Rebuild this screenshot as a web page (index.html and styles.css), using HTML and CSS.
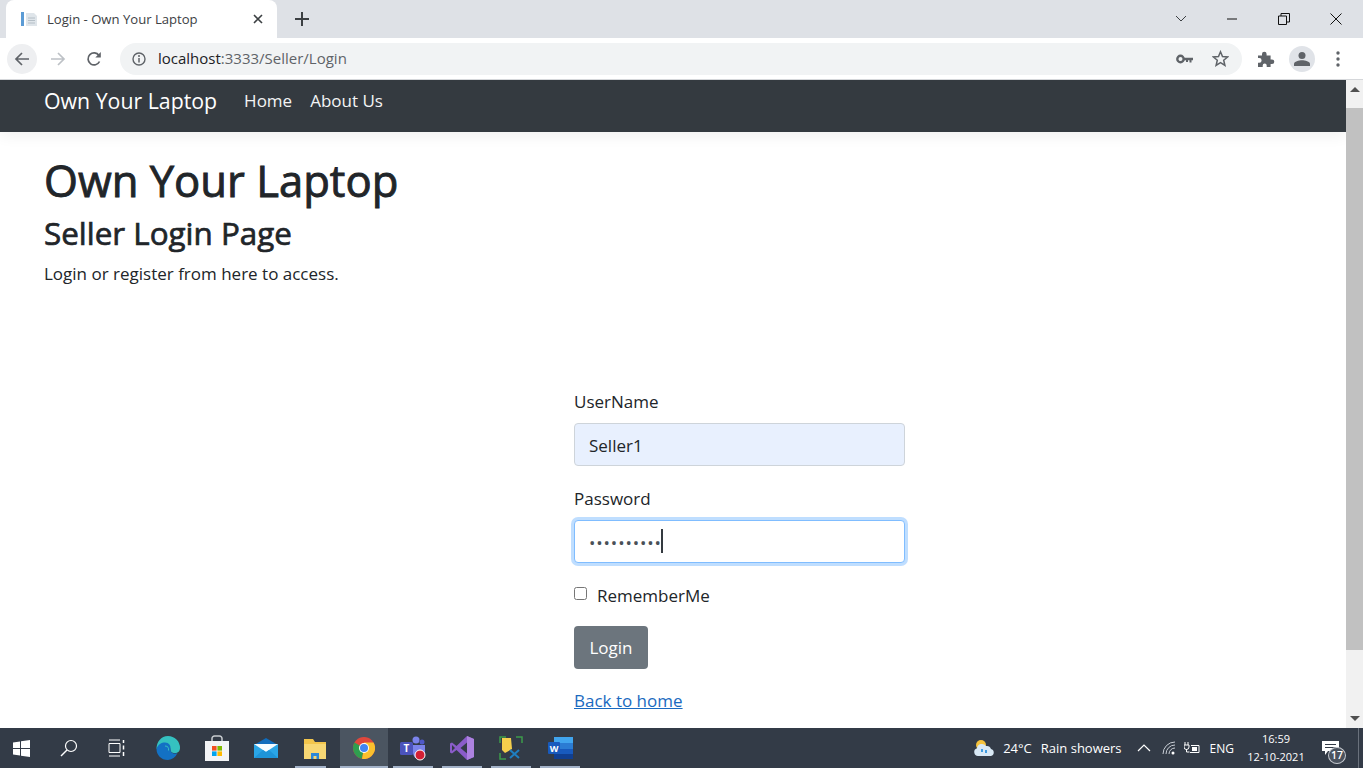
FILE: index.html
```html
<!DOCTYPE html>
<html lang="en">
<head>
  <meta charset="UTF-8">
  <meta name="viewport" content="width=device-width, initial-scale=1.0">
  <title>Login - Own Your Laptop</title>
  <link rel="stylesheet" href="styles.css">
</head>
<body>
  <!-- browser tabs -->
  <div class="tabstrip">
    <div class="tab">
      <svg class="favicon" width="18" height="18" viewBox="0 0 18 18"><rect x="1" y="2" width="3" height="14" fill="#5b9bd5"/><path d="M6 3h8l3 3v10H6z" fill="#dfe5ea"/><path d="M8 8h7M8 10.500h7M8 13h7" stroke="#b4bec6"/></svg>
      <span class="tab-title">Login - Own Your Laptop</span>
      <svg class="tab-close" width="10" height="10" viewBox="0 0 10 10"><path d="M1 1l8 8M9 1l-8 8" stroke="#3c4043" stroke-width="1.600"/></svg>
    </div>
    <svg class="new-tab" width="14" height="14" viewBox="0 0 14 14"><path d="M7 0v14M0 7h14" stroke="#3c4043" stroke-width="2"/></svg>
    <div class="window-controls">
      <svg class="win-btn" width="12" height="12" viewBox="0 0 12 12"><path d="M1 3l5 5 5-5" fill="none" stroke="#3c4043"/></svg>
      <svg class="win-btn" width="12" height="12" viewBox="0 0 12 12"><path d="M1 6h10" stroke="#111"/></svg>
      <svg class="win-btn" width="12" height="12" viewBox="0 0 12 12"><path d="M.5 3h8v8.500h-8zM3 3V.5h8.500V9H8.500" fill="none" stroke="#111"/></svg>
      <svg class="win-btn" width="12" height="12" viewBox="0 0 12 12"><path d="M.5.500l11 11M11.500.500l-11 11" stroke="#111"/></svg>
    </div>
  </div>

  <!-- address bar -->
  <div class="toolbar">
    <div class="tool-btn back">
      <svg width="16" height="16" viewBox="0 0 16 16"><path d="M15 8H2M8 2L2 8l6 6" fill="none" stroke="#5f6368" stroke-width="1.700"/></svg>
    </div>
    <div class="tool-btn forward">
      <svg width="16" height="16" viewBox="0 0 16 16"><path d="M1 8h13M8 2l6 6-6 6" fill="none" stroke="#bdc1c6" stroke-width="1.700"/></svg>
    </div>
    <div class="tool-btn reload">
      <svg width="16" height="16" viewBox="0 0 16 16"><path d="M13.500 10.500A6 6 0 1 1 13 4.500" fill="none" stroke="#5f6368" stroke-width="1.700"/><path d="M14.800 1v5.500H9.300z" fill="#5f6368"/></svg>
    </div>
    <div class="omnibox">
      <svg class="info-icon" width="14" height="14" viewBox="0 0 14 14"><circle cx="7" cy="7" r="6" fill="none" stroke="#5f6368" stroke-width="1.400"/><path d="M7 6v4.500" stroke="#5f6368" stroke-width="1.500"/><circle cx="7" cy="4" r="1" fill="#5f6368"/></svg>
      <span class="url"><span class="url-host">localhost</span>:3333/Seller/Login</span>
      <svg class="omni-key" width="17" height="10" viewBox="0 0 17 10"><circle cx="4.500" cy="5" r="3.200" fill="none" stroke="#5f6368" stroke-width="2.400"/><path d="M8 3.800h9v2.400h-1.500V8.500h-2V6.200h-1.500V8h-2V6.200H8z" fill="#5f6368"/></svg>
      <svg class="omni-star" width="17" height="17" viewBox="0 0 17 17"><path d="M8.500 1.800l2 4.800 5.100.400-3.900 3.300 1.200 5-4.400-2.700-4.400 2.700 1.200-5L1.400 7l5.100-.400z" fill="none" stroke="#5f6368" stroke-width="1.500"/></svg>
    </div>
    <svg class="puzzle" width="18" height="18" viewBox="0 0 18 18"><path d="M1 5.500h4V4a2.300 2.300 0 0 1 4.600 0v1.500h4v4H15a2.300 2.300 0 0 1 0 4.600h-1.400V17H9.700v-1.400a2 2 0 0 0-4 0V17H1v-4.300h1.300a2.300 2.300 0 0 0 0-4.600H1z" fill="#5f6368"/></svg>
    <div class="avatar">
      <svg width="16" height="14" viewBox="0 0 16 14"><circle cx="8" cy="3.500" r="3.500" fill="#5f6368"/><path d="M0 14v-2c0-2.500 5-3.700 8-3.700s8 1.200 8 3.700v2z" fill="#5f6368"/></svg>
    </div>
    <svg class="menu-dots" width="4" height="16" viewBox="0 0 4 16"><circle cx="2" cy="2" r="1.700" fill="#5f6368"/><circle cx="2" cy="8" r="1.700" fill="#5f6368"/><circle cx="2" cy="14" r="1.700" fill="#5f6368"/></svg>
  </div>

  <!-- the page itself -->
  <div class="viewport">
    <div class="page">
      <nav class="navbar">
        <a class="brand">Own Your Laptop</a>
        <a class="nav-link">Home</a>
        <a class="nav-link">About Us</a>
      </nav>
      <div class="container">
        <h1>Own Your Laptop</h1>
        <h2>Seller Login Page</h2>
        <p class="lead-text">Login or register from here to access.</p>
        <form class="login-form">
          <div class="form-group">
            <label for="userName">UserName</label>
            <input class="form-control autofilled" type="text" id="userName" value="Seller1">
          </div>
          <div class="form-group">
            <label for="password">Password</label>
            <div class="input-wrap">
              <input class="form-control focused" type="password" id="password" value="Seller@123">
              <span class="caret"></span>
            </div>
          </div>
          <div class="form-check">
            <input class="check-box" type="checkbox" id="rememberMe">
            <label for="rememberMe">RememberMe</label>
          </div>
          <button class="btn-login" type="button">Login</button>
          <a class="back-link" href="#">Back to home</a>
        </form>
      </div>
    </div>
    <div class="scrollbar">
      <span class="arrow-up"></span>
      <div class="thumb"></div>
      <span class="arrow-down"></span>
    </div>
  </div>

  <!-- windows taskbar -->
  <div class="taskbar">
    <div class="task-cell start">
      <svg width="17" height="17" viewBox="0 0 17 17"><path d="M0 2.400l7-1v6.700H0zM8 1.300L17 0v8.100H8zM0 9h7v6.600l-7-1zM8 9h9v8l-9-1.300z" fill="#fff"/></svg>
    </div>
    <div class="task-cell search">
      <svg width="18" height="18" viewBox="0 0 18 18"><circle cx="11" cy="7" r="5.500" fill="none" stroke="#fff" stroke-width="1.200"/><path d="M7 11l-6 6" stroke="#fff" stroke-width="1.400"/></svg>
    </div>
    <div class="task-cell taskview">
      <svg width="18" height="18" viewBox="0 0 18 18"><path d="M1 1h11M1 17h11M1 4.500h11v9H1z" fill="none" stroke="#fff"/><path d="M15.500 1v3M15.500 6.500v4M15.500 13v4" stroke="#fff" stroke-width="1.500"/></svg>
    </div>
    <div class="task-apps">
      <div class="task-cell">
        <svg width="24" height="24" viewBox="0 0 24 24"><path d="M12 0a12 12 0 0 1 12 12c0 3-2 5-5 5-3.500 0-4.500-1.500-4.500-3 0-3-2-5.500-5.500-5.500C5 8.500 2 11 .5 13 .5 6 5 0 12 0z" fill="#35c1c0"/><path d="M.5 13C2 8 5.500 6.500 9 6.500c4 0 6 3 5.500 6.500-.5 3.500 3 5.500 7 4A12 12 0 0 1 12 24C5 24 .5 19 .5 13z" fill="#1371c4"/><path d="M9 10c3 0 4 2 3.500 4.500" stroke="#35c1c0" fill="none"/></svg>
      </div>
      <div class="task-cell">
        <svg width="24" height="26" viewBox="0 0 24 26"><path d="M7 7V3.500A2.500 2.500 0 0 1 9.500 1h5A2.500 2.500 0 0 1 17 3.500V7" fill="none" stroke="#c8ccd0" stroke-width="1.500"/><rect y="6" width="24" height="20" fill="#f3f4f6"/><rect x="7" y="11" width="4.600" height="4.600" fill="#f25022"/><rect x="12.400" y="11" width="4.600" height="4.600" fill="#7fba00"/><rect x="7" y="16.400" width="4.600" height="4.600" fill="#00a4ef"/><rect x="12.400" y="16.400" width="4.600" height="4.600" fill="#ffb900"/></svg>
      </div>
      <div class="task-cell">
        <svg width="24" height="20" viewBox="0 0 24 20"><path d="M12 0l12 7H0z" fill="#0f6cbd"/><rect y="6" width="24" height="14" fill="#2aa5e6"/><path d="M0 6l12 8 12-8" fill="#f4fbff"/><path d="M0 20l9-8 3 2 3-2 9 8z" fill="#1e94d8"/></svg>
      </div>
      <div class="task-cell running short">
        <svg width="22" height="21" viewBox="0 0 22 21"><path d="M0 1h9l2 3h11v17H0z" fill="#f2c54c"/><path d="M0 6h22v15H0z" fill="#f7d774"/><path d="M7 21v-6h8v6h-2.500v-3h-3v3z" fill="#2b88d8"/></svg>
      </div>
      <div class="task-cell running active">
        <svg width="22" height="22" viewBox="0 0 22 22"><circle cx="11" cy="11" r="11" fill="#e0473c"/><path d="M11 11L1.470 5.500A11 11 0 0 0 9 21.800z" fill="#2f9e4f"/><path d="M11 5.500h9.530A11 11 0 0 1 9 21.800L11 11z" fill="#fbc02d"/><circle cx="11" cy="11" r="5" fill="#fff"/><circle cx="11" cy="11" r="4" fill="#4285f4"/></svg>
      </div>
      <div class="task-cell running">
        <svg width="26" height="26" viewBox="0 0 26 26"><circle cx="16" cy="5" r="3.500" fill="#7b83eb"/><circle cx="22" cy="7" r="2.500" fill="#5059c9"/><path d="M11 10h14v8a6 6 0 0 1-12 0z" fill="#7b83eb"/><rect y="7" width="13" height="13" rx="1.500" fill="#4b53bc"/><text class="teams-t" x="6.500" y="17" text-anchor="middle">T</text><circle cx="20" cy="20" r="5" fill="#d41f35" stroke="#fff"/></svg>
      </div>
      <div class="task-cell running">
        <svg width="24" height="24" viewBox="0 0 24 24"><path d="M17 0l7 3v18l-7 3L6.500 14 2 17.500 0 16.500v-9l2-1L6.500 10z" fill="#8a5cc9"/><path d="M17 6.500L10.500 12l6.500 5.500z" fill="#333b47"/><path d="M2 9v6l3-3z" fill="#333b47"/><path d="M17 0l7 3v18l-7 3z" fill="#ad82e0"/></svg>
      </div>
      <div class="task-cell running">
        <svg width="24" height="24" viewBox="0 0 24 24"><path d="M1 7V1h6M23 7V1h-6M1 17v6h6" fill="none" stroke="#3d9c4b" stroke-width="1.500"/><path d="M3 2h9l1 11-7 4-3-3z" fill="#f5cf4c"/><path d="M11 14l9 8M20 14l-9 8" stroke="#1f7fc2" stroke-width="2"/></svg>
      </div>
      <div class="task-cell running">
        <svg width="25" height="24" viewBox="0 0 25 24"><rect x="6" y="1" width="19" height="22" rx="1" fill="#2b7cd3"/><rect x="6" y="1" width="19" height="6" fill="#41a5ee"/><rect x="6" y="13" width="19" height="5" fill="#185abd"/><rect x="6" y="18" width="19" height="5" fill="#103f91"/><rect y="6" width="12" height="12" rx="1" fill="#185abd"/><text class="word-w" x="6" y="15.500" text-anchor="middle">W</text></svg>
      </div>
    </div>

    <div class="tray">
      <svg class="tray-weather" width="22" height="18" viewBox="0 0 22 18"><circle cx="8" cy="6" r="5" fill="#f5c23c"/><path d="M5 17a4 4 0 0 1-1-7.800A5 5 0 0 1 13 7a4.500 4.500 0 0 1 5 3 3.600 3.600 0 0 1 0 7z" fill="#d8e8f5"/><path d="M9 10v3M13 11v3" stroke="#3f9be0" stroke-width="2"/></svg>
      <span class="tray-temp">24°C</span>
      <span class="tray-forecast">Rain showers</span>
      <svg class="tray-up" width="14" height="8" viewBox="0 0 14 8"><path d="M1 7l6-6 6 6" fill="none" stroke="#fff" stroke-width="1.200"/></svg>
      <svg class="tray-wifi" width="14" height="14" viewBox="0 0 14 14"><path d="M1 13A12 12 0 0 1 13 1M4 13a9 9 0 0 1 9-9M7 13a6 6 0 0 1 6-6" fill="none" stroke="#c9ced6"/><circle cx="11" cy="12" r="1.500" fill="#fff"/></svg>
      <svg class="tray-battery" width="16" height="12" viewBox="0 0 16 12"><path d="M1 0v3M4 0v3M0 3h5v2a2.500 2.500 0 0 1-5 0zM2.500 7v3h3" fill="none" stroke="#fff"/><path d="M7 3.500h8v7H6" fill="none" stroke="#fff"/><rect x="8" y="5" width="5" height="4" fill="#fff"/></svg>
      <span class="tray-lang">ENG</span>
      <div class="tray-clock">
        <span>16:59</span>
        <span>12-10-2021</span>
      </div>
      <div class="tray-notify">
        <svg class="notify-icon" width="17" height="14" viewBox="0 0 17 14"><path d="M0 0h17v10H6l-3 4v-4H0z" fill="#fff"/><path d="M3 3.500h11M3 6.500h11" stroke="#333b47"/></svg>
        <span class="notify-badge">17</span>
      </div>
      <div class="show-desktop"></div>
    </div>
  </div>
</body>
</html>
```

FILE: styles.css
```css
* {
  box-sizing: border-box;
}

body {
  margin: 0;
  height: 768px;
  overflow: hidden;
  display: flex;
  flex-direction: column;
  background: #fff;
  color: #212529;
  font-family: "Open Sans", "Noto Sans", sans-serif;
}

/* tabs */
.tabstrip {
  height: 38px;
  flex: none;
  display: flex;
  align-items: center;
  background: #dee1e6;
  padding-left: 6px;
}

.tab {
  width: 271px;
  height: 38px;
  display: flex;
  align-items: center;
  padding: 0 14px;
  background: #fff;
  border-radius: 8px 8px 0 0;
}

.favicon {
  flex: none;
  margin-right: 9px;
}

.tab-title {
  flex: 1;
  font-size: 13.100px;
  color: #3c4043;
}

.new-tab {
  margin-left: 18px;
}

.window-controls {
  margin-left: auto;
  display: flex;
  padding-right: 21px;
  gap: 40px;
}

.win-btn {
  display: block;
}

.win-btn:first-child {
  margin-right: -1px;
}

/* toolbar */
.toolbar {
  height: 42px;
  flex: none;
  display: flex;
  align-items: center;
  background: #fff;
  border-bottom: 1px solid #d5d7da;
  padding-left: 7px;
}

.tool-btn {
  width: 30px;
  height: 30px;
  flex: none;
  display: flex;
  align-items: center;
  justify-content: center;
  border-radius: 50%;
}

.back {
  background: #eeeff1;
}

.forward {
  margin-left: 6px;
}

.reload {
  margin-left: 6px;
}

.omnibox {
  width: 1122px;
  height: 32px;
  margin-left: 11px;
  display: flex;
  align-items: center;
  background: #f1f3f4;
  border-radius: 16px;
  padding: 0 13px 0 12px;
}

.url {
  margin: 0 0 2px 12px;
  font-size: 15px;
  color: #5f6368;
}

.url-host {
  color: #202124;
}

.omni-key {
  margin-left: auto;
}

.omni-star {
  margin-left: 19px;
}

.puzzle {
  margin-left: 15px;
}

.avatar {
  width: 26px;
  height: 26px;
  margin-left: 14px;
  display: flex;
  align-items: center;
  justify-content: center;
  border-radius: 50%;
  background: #e0e3e8;
}

.menu-dots {
  margin-left: 21px;
}

/* page */
.viewport {
  height: 648px;
  flex: none;
  display: flex;
  overflow: hidden;
}

.page {
  flex: 1;
  min-width: 0;
}

.navbar {
  height: 52px;
  display: flex;
  align-items: center;
  padding: 0 44px 12px;
  background: #343a40;
  box-shadow: 0 4px 14px rgba(0, 0, 0, .06);
}

.brand {
  font-size: 21.300px;
  color: #fff;
  margin-right: 27px;
}

.nav-link {
  font-size: 17px;
  color: #f3f4f5;
  margin-right: 18px;
}

.container {
  padding: 0 44px;
}

h1 {
  margin: 17px 0 0;
  font-size: 43.600px;
  font-weight: 400;
  line-height: 62px;
  -webkit-text-stroke: .9px #212529;
}

h2 {
  margin: 1px 0 7px;
  font-size: 31.400px;
  font-weight: 400;
  line-height: 42px;
  -webkit-text-stroke: .7px #212529;
}

.lead-text {
  margin: 0;
  font-size: 17px;
  line-height: 26px;
}

.login-form {
  width: 331px;
  margin: 101px 0 0 530px;
  font-size: 17px;
}

.form-group {
  margin-bottom: 19px;
}

.form-group label {
  display: block;
  line-height: 28px;
  margin-bottom: 7px;
}

.form-control {
  display: block;
  width: 100%;
  height: 43px;
  padding: 2px 14px 0;
  border: 1px solid #ced4da;
  border-radius: 4px;
  font: inherit;
  color: #495057;
  outline: none;
}

.autofilled {
  background: #e8f0fe;
  color: #212529;
}

.focused {
  border-color: #80bdff;
  box-shadow: 0 0 0 3px rgba(0, 123, 255, .25);
  letter-spacing: .9px;
}

.input-wrap {
  position: relative;
}

.caret {
  position: absolute;
  left: 87px;
  top: 9px;
  width: 2px;
  height: 24px;
  background: #343a40;
}

.form-check {
  display: flex;
  align-items: center;
  margin-bottom: 16px;
  line-height: 28px;
}

.check-box {
  width: 13px;
  height: 13px;
  margin: 0 10px 6px 0;
}

.btn-login {
  display: block;
  width: 74px;
  height: 43px;
  background: #6c757d;
  color: #fff;
  border: none;
  border-radius: 4px;
  font: inherit;
  padding: 0;
}

.back-link {
  display: inline-block;
  margin-top: 19px;
  color: #1a6ac0;
  text-decoration: underline;
  line-height: 26px;
}

/* scrollbar */
.scrollbar {
  width: 17px;
  flex: none;
  display: flex;
  flex-direction: column;
  align-items: center;
  background: #f1f1f1;
}

.arrow-up {
  margin-top: 7px;
  border: 5px solid transparent;
  border-top: 0;
  border-bottom: 5px solid #505050;
}

.thumb {
  width: 100%;
  height: 542px;
  margin-top: 16px;
  background: #c1c1c1;
}

.arrow-down {
  margin-top: 66px;
  border: 5px solid transparent;
  border-bottom: 0;
  border-top: 5px solid #505050;
}

/* taskbar */
.taskbar {
  height: 40px;
  flex: none;
  display: flex;
  align-items: stretch;
  background: #333b47;
  color: #fff;
}

.task-cell {
  position: relative;
  width: 48px;
  display: flex;
  align-items: center;
  justify-content: center;
}

.start {
  width: 42px;
}

.search {
  margin-left: 3px;
}

.task-apps {
  display: flex;
  gap: 1px;
  margin-left: 3px;
}

.task-cell.active {
  background: #4b5561;
}

/* line under a running app */
.running::after {
  content: "";
  position: absolute;
  left: 4px;
  right: 4px;
  bottom: 0;
  height: 2px;
  background: #a3b2c8;
}

.running.short::after {
  right: 13px;
}

.running.active::after {
  left: 0;
  right: 0;
}

.teams-t {
  font-size: 10px;
  font-weight: 700;
  fill: #fff;
}

.word-w {
  font-size: 9px;
  font-weight: 700;
  fill: #fff;
}

.tray {
  margin-left: auto;
  display: flex;
  align-items: center;
  font-size: 13px;
}

.tray-temp {
  margin-left: 8px;
}

.tray-forecast {
  margin-left: 9px;
}

.tray-up {
  margin-left: 15px;
}

.tray-wifi {
  margin-left: 11px;
}

.tray-battery {
  margin-left: 8px;
}

.tray-lang {
  margin-left: 10px;
  font-size: 12px;
}

.tray-clock {
  width: 58px;
  margin-left: 13px;
  display: flex;
  flex-direction: column;
  align-items: center;
  font-size: 11px;
  line-height: 18px;
  white-space: nowrap;
}

.tray-notify {
  position: relative;
  width: 30px;
  height: 100%;
  margin-left: 17px;
}

.notify-icon {
  display: block;
  margin-top: 13px;
}

.notify-badge {
  position: absolute;
  left: 6px;
  top: 19px;
  width: 18px;
  height: 17px;
  border: 1px solid #c5c9cf;
  border-radius: 50%;
  background: #4a525e;
  font-size: 10.500px;
  font-weight: 600;
  line-height: 15px;
  text-align: center;
}

.show-desktop {
  width: 1px;
  height: 100%;
  margin-left: 6px;
  margin-right: 4px;
  background: #6a717c;
}
```
